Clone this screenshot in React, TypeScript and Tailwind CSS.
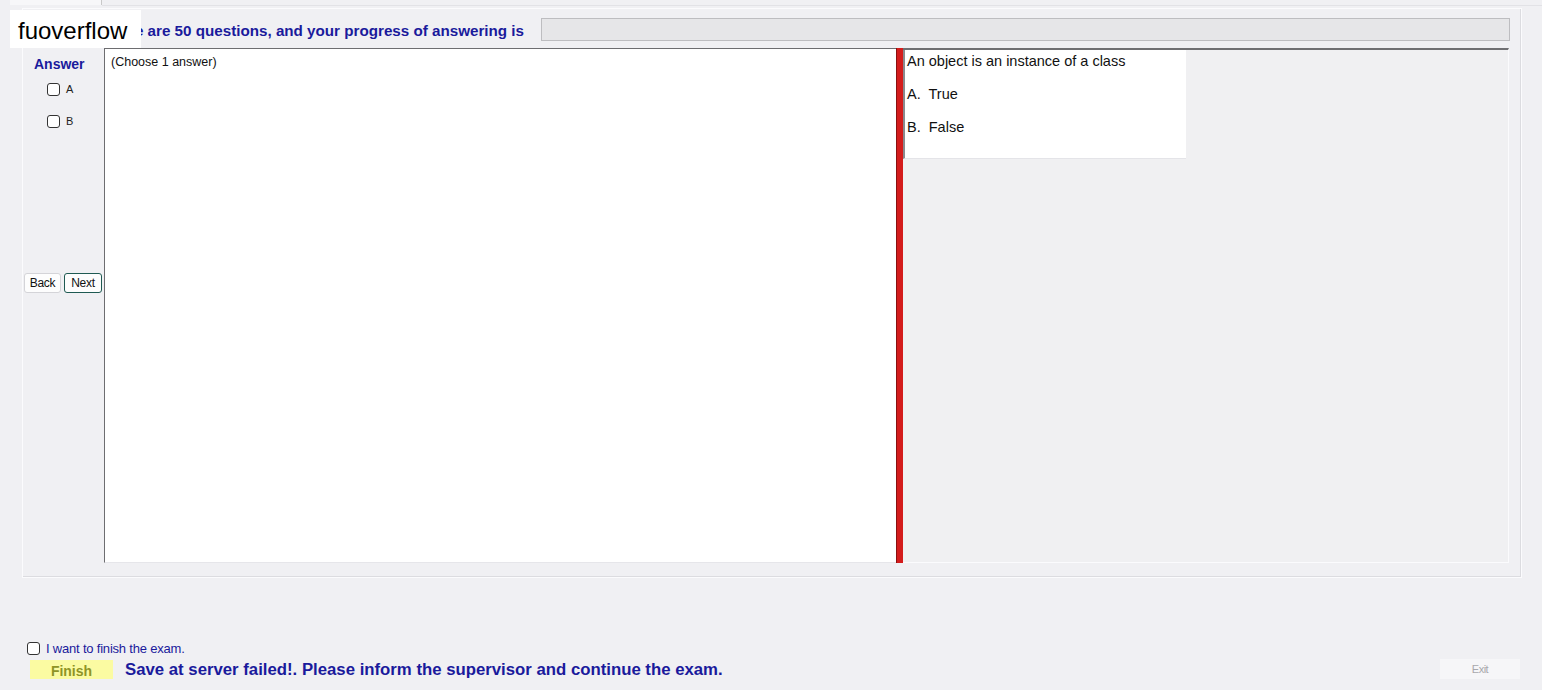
import { useState } from "react"

const options = [
  { key: "A", text: "True" },
  { key: "B", text: "False" },
]

function Box({ checked, onChange }: { checked: boolean; onChange: () => void }) {
  return (
    <button
      onClick={onChange}
      className="w-[13px] h-[13px] rounded-[3px] border border-[#333] bg-white flex items-center justify-center"
    >
      {checked && <span className="w-[7px] h-[7px] bg-[#333] rounded-[1px]" />}
    </button>
  )
}

export default function App() {
  const [answers, setAnswers] = useState<Record<string, boolean>>({})
  const [finish, setFinish] = useState(false)

  return (
    <div className="relative w-[1542px] h-[690px] bg-[#f0f0f3] overflow-hidden font-['Liberation_Sans',Arial,sans-serif]">
      {/* tab strip */}
      <div className="flex h-[6px]">
        <div className="ml-[10px] w-[92px] h-[5px] bg-[#f7f7f9] border-r border-[#c8c8c8]" />
        <div className="flex-1 border-b border-[#e2e2e6]" />
      </div>

      {/* main group */}
      <div className="ml-[22px] mt-[2px] w-[1500px] h-[570px] border border-[#fbfbfd] shadow-[inset_-1px_-1px_0_#dcdce0] flex flex-col">
        <div className="flex items-center h-[24px] mt-[8px]">
          <div className="ml-[79px] w-[439px] pt-[5px] text-[15.2px] font-bold text-[#1a1a9c] whitespace-nowrap">
            There are 50 questions, and your progress of answering is
          </div>
          <div className="w-[969px] h-[23px] bg-[#e6e6e8] border border-[#bdbdc0]" />
        </div>

        <div className="flex mt-[7px] h-[515px]">
          {/* answer column */}
          <div className="w-[81px] flex flex-col">
            <div className="mt-[6px] ml-[11px] text-[14px] font-bold text-[#1a1a9c]">Answer</div>
            {options.map((o, i) => (
              <label
                key={o.key}
                className={`flex items-center gap-[6px] ml-[24px] ${i === 0 ? "mt-[8px]" : "mt-[19px]"}`}
              >
                <Box
                  checked={!!answers[o.key]}
                  onChange={() => setAnswers({ ...answers, [o.key]: !answers[o.key] })}
                />
                <span className="text-[11px] text-[#222] leading-none">{o.key}</span>
              </label>
            ))}
            <div className="flex gap-[3px] ml-[1px] mt-[145px]">
              <button className="w-[37px] h-[20px] bg-[#fdfdfd] border border-[#d4d4d8] rounded-[3px] text-[12px] text-[#111] tracking-[-0.3px]">
                Back
              </button>
              <button className="w-[38px] h-[20px] bg-[#fdfdfd] border border-[#1f5a52] rounded-[3px] text-[12px] text-[#111] tracking-[-0.3px]">
                Next
              </button>
            </div>
          </div>

          {/* question panel */}
          <div className="w-[792px] bg-white border-l border-t border-[#6d6d70] border-b-[#e6e6ea] border-b pl-[6px] pt-[4px]">
            <div className="text-[12.5px] text-[#111]">(Choose 1 answer)</div>
          </div>

          {/* splitter */}
          <div className="w-[7px] bg-[#d41c1c] border-l border-[#8a1010]" />

          {/* content panel */}
          <div className="w-[606px] bg-[#f0f0f2] border-t-2 border-[#6f6f72] border-r border-r-[#fbfbfd] border-b border-b-[#fbfbfd]">
            <div className="w-[283px] h-[109px] bg-white border-l-2 border-[#8a8a8e] border-b border-b-[#e4e4e8] pl-[2px] pt-[1px] text-[14.5px] text-[#111]">
              <div>An object is an instance of a class</div>
              {options.map((o) => (
                <div key={o.key} className="mt-[11px]">
                  {o.key}.&nbsp; {o.text}
                </div>
              ))}
            </div>
          </div>
        </div>
      </div>

      {/* bottom */}
      <div className="ml-[27px] mt-[61px] flex items-center gap-[6px]">
        <Box checked={finish} onChange={() => setFinish(!finish)} />
        <span className="text-[13px] text-[#1a1a9c] tracking-[-0.2px]">I want to finish the exam.</span>
      </div>
      <div className="flex items-center mt-[-2px]">
        <button className="ml-[30px] w-[83px] h-[19px] bg-[#fbfba2] text-[14px] font-bold text-[#8f9426] pt-[1px]">
          Finish
        </button>
        <div className="ml-[12px] text-[16.75px] font-bold text-[#1a1a9c]">
          Save at server failed!. Please inform the supervisor and continue the exam.
        </div>
        <button className="ml-auto mr-[22px] w-[80px] h-[20px] bg-[#f6f6f8] text-[11px] text-[#a8a8ac] tracking-[-0.5px]">
          Exit
        </button>
      </div>

      {/* watermark */}
      <div className="absolute left-[10px] top-[10px] w-[131px] h-[38px] bg-white flex items-center pl-[8px] pt-[4px] text-[24px] text-black">
        fuoverflow
      </div>
    </div>
  )
}
